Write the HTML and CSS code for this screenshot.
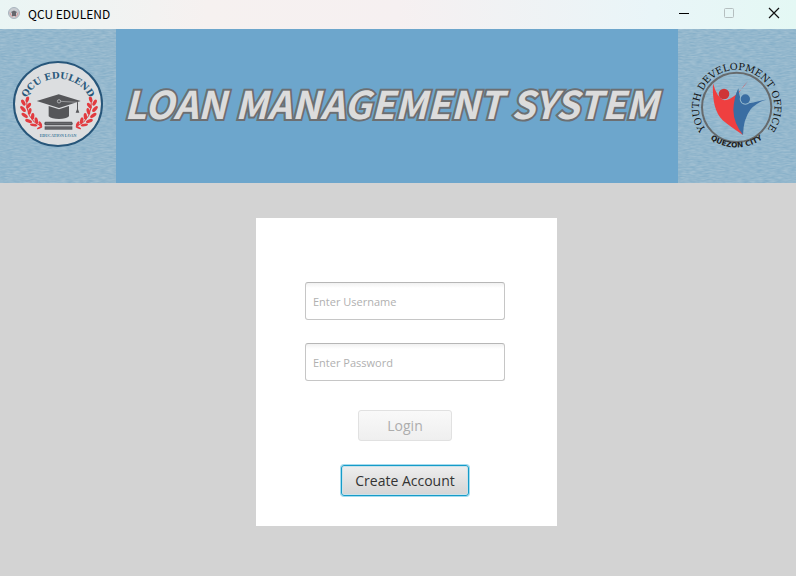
FILE: index.html
```html
<!DOCTYPE html>
<html lang="en">
<head>
<meta charset="utf-8">
<title>QCU EDULEND</title>
<link rel="stylesheet" href="styles.css">
</head>
<body>
<div class="titlebar">
  <svg class="app-icon" viewBox="0 0 12 12" aria-hidden="true">
    <circle cx="6" cy="6" r="5.5" fill="#c9cdd2" stroke="#a9b4bd"/>
    <path d="M2 5.500Q2.300 9.200 5 10M10 5.500Q9.700 9.200 7 10" fill="none" stroke="#d99a9a"/>
    <path d="M3 5L6 3.500L9 5L8 6V9H4V6Z" fill="#66666c"/>
  </svg>
  <span class="app-name">QCU EDULEND</span>
  <div class="window-controls">
    <button type="button" aria-label="Minimize"><svg viewBox="0 0 10 10"><path d="M0 5.500H10" stroke="#000"/></svg></button>
    <button type="button" aria-label="Maximize" disabled><svg viewBox="0 0 10 10"><rect x=".5" y=".5" width="9" height="9" rx="1" stroke="#b5bfc0"/></svg></button>
    <button type="button" aria-label="Close"><svg viewBox="0 0 10 10"><path d="M0 0L10 10M10 0L0 10" stroke="#111" stroke-width="1.200"/></svg></button>
  </div>
</div>

<header class="banner">
  <svg class="emblem emblem-left" viewBox="0 -63 348 462" role="img" aria-label="QCU EDULEND Education Loan">
    <defs>
      <filter id="weave" x="0" y="0" width="1" height="1" color-interpolation-filters="sRGB">
        <feTurbulence type="fractalNoise" baseFrequency=".05 .22" numOctaves="2" seed="4"/>
        <feColorMatrix values="0.16 0 0 0 .5  0.1 0 0 0 .67  0.06 0 0 0 .775  0 0 0 0 1"/>
      </filter>
      <path id="name-arc" d="M77 149A106 106 0 0 1 271 149"/>
      <g id="laurel" fill="#e23b40">
        <path d="M80 143Q75 209 124 229" fill="none" stroke="#e23b40" stroke-width="3"/>
        <ellipse cx="82" cy="148" rx="5" ry="9" transform="rotate(20 82 148)"/>
        <ellipse cx="70" cy="158" rx="5" ry="10" transform="rotate(-30 70 158)"/>
        <ellipse cx="86" cy="167" rx="5" ry="10" transform="rotate(35 86 167)"/>
        <ellipse cx="69" cy="177" rx="5" ry="11" transform="rotate(-43 69 177)"/>
        <ellipse cx="89" cy="184" rx="5" ry="10" transform="rotate(15 89 184)"/>
        <ellipse cx="74" cy="196" rx="5" ry="11" transform="rotate(-55 74 196)"/>
        <ellipse cx="98" cy="199" rx="5" ry="10" transform="rotate(5 98 199)"/>
        <ellipse cx="86" cy="213" rx="5" ry="11" transform="rotate(-68 86 213)"/>
        <ellipse cx="109" cy="212" rx="5" ry="10" transform="rotate(-12 109 212)"/>
        <ellipse cx="101" cy="225" rx="4" ry="11" transform="rotate(-82 101 225)"/>
        <ellipse cx="121" cy="222" rx="4" ry="9" transform="rotate(-30 121 222)"/>
        <ellipse cx="119" cy="233" rx="3" ry="9" transform="rotate(65 119 233)"/>
      </g>
    </defs>
    <rect y="-63" width="348" height="462" filter="url(#weave)"/>
    <ellipse cx="174" cy="162" rx="132" ry="126" fill="#dcdee0" stroke="#27567a" stroke-width="6"/>
    <text class="arc-name"><textPath href="#name-arc" startOffset="50%">QCU EDULEND</textPath></text>
    <use href="#laurel"/>
    <use href="#laurel" transform="matrix(-1 0 0 1 354 0)"/>
    <g fill="#555659">
      <path d="M110 153L176 133L242 153L177 174Z"/>
      <path d="M146 168L177 178L207 168V199Q198 207 177 207Q155 207 146 199Z"/>
      <path d="M231 155H234V178L238 188H227L231 178Z"/>
      <path d="M136 215H216Q221 221 216 226H136Q130 220 136 215Z"/>
      <path d="M134 229H217V239H134Z"/>
    </g>
    <circle cx="177" cy="154" r="5" fill="#555659" stroke="#d5d7d9" stroke-width="2"/>
    <path d="M182 154L232 157" fill="none" stroke="#d5d7d9" stroke-width="1.500"/>
    <path d="M138 220H214M136 234H215" fill="none" stroke="#a5a7a9" stroke-width="1"/>
    <text class="motto" x="174" y="262">EDUCATION LOAN</text>
  </svg>

  <h1 class="heading">LOAN MANAGEMENT SYSTEM</h1>

  <svg class="emblem emblem-right" viewBox="6 -63 354 462" role="img" aria-label="Youth Development Office Quezon City">
    <defs>
      <path id="office-arc" d="M95 245A113 113 0 1 1 269 245"/>
      <path id="city-arc" d="M82 247A132 132 0 0 0 281 247"/>
    </defs>
    <rect x="6" y="-63" width="354" height="462" filter="url(#weave)"/>
    <circle cx="182" cy="172" r="104" fill="none" stroke="#666a6c" stroke-width="6"/>
    <text class="office"><textPath href="#office-arc" startOffset="50%">YOUTH DEVELOPMENT OFFICE</textPath></text>
    <text class="city"><textPath href="#city-arc" startOffset="50%">QUEZON CITY</textPath></text>
    <path d="M111 100Q123 146 146 151Q176 148 216 93Q188 123 180 149Q166 188 201 255Q164 231 140 211Q107 179 111 100Z" fill="#ef3f40"/>
    <circle cx="144" cy="132" r="16" fill="#cf3537"/>
    <path d="M187 115Q190 151 207 161Q231 159 272 148Q241 159 224 178Q202 207 201 255Q173 220 172 180Q174 141 187 115Z" fill="#3a6da2"/>
    <circle cx="208" cy="147" r="17" fill="#94b8cd"/>
    <circle cx="208" cy="147" r="14" fill="#3a6da2"/>
  </svg>
</header>

<main class="content">
  <form class="login-card">
    <input class="field" type="text" placeholder="Enter Username" aria-label="Enter Username">
    <input class="field" type="password" placeholder="Enter Password" aria-label="Enter Password">
    <button class="button login" type="submit" disabled>Login</button>
    <button class="button create" type="button">Create Account</button>
  </form>
</main>
</body>
</html>
```
FILE: styles.css
```css
* { box-sizing: border-box; }

body {
  margin: 0;
  min-height: 100vh;
  background: #d3d3d3;
  font-family: "Open Sans", "Noto Sans", sans-serif;
}

.titlebar {
  display: flex;
  align-items: center;
  height: 29px;
  padding-left: 8px;
  padding-bottom: 3px;
  background: linear-gradient(90deg, #eaf5f4, #f6f1f0 26%, #f6f0f1 50%, #e9f5f8 82%, #e4f8f4);
}

.app-icon { width: 12px; height: 12px; margin-right: 8px; }
.app-name { font-size: 12px; font-family: "Noto Sans CJK SC", sans-serif; }

.window-controls { display: flex; margin-left: auto; }
.window-controls button {
  display: flex;
  align-items: center;
  justify-content: center;
  width: 45px;
  height: 26px;
  padding: 0;
  border: 0;
  background: none;
}
.window-controls svg { width: 10px; height: 10px; fill: none; overflow: visible; }

.banner {
  display: flex;
  align-items: center;
  height: 154px;
  background: #6da6cc;
}

.emblem { flex: none; height: 154px; }
.emblem-left { width: 116px; }
.emblem-right { width: 118px; }

.emblem text { text-anchor: middle; }
.arc-name { font: bold 27px "DejaVu Serif", serif; fill: #28587a; }
.motto { font: bold 12px "Liberation Serif", serif; fill: #437b9b; }
.office { font: 29px "DejaVu Serif", serif; fill: #111; }
.city { font: bold 22px "DejaVu Sans", sans-serif; fill: #222; }

.heading {
  flex: 1;
  min-width: 0;
  margin: 0;
  padding: 0 12px 8px 0;
  text-align: center;
  white-space: nowrap;
  font: italic bold 38px "Noto Sans CJK SC", sans-serif;
  color: #dcdcdc;
  -webkit-text-stroke: 4px #6c6f72;
  paint-order: stroke fill;
}

.content {
  display: flex;
  justify-content: center;
  padding: 35px 0 35px 17px;
}

.login-card {
  display: flex;
  flex-direction: column;
  align-items: center;
  width: 301px;
  padding: 64px 51px 30px 48px;
  background: #fff;
}

.field {
  width: 200px;
  height: 38px;
  margin-bottom: 23px;
  padding: 0 7px;
  border: 1px solid #c6c6c6;
  border-top-color: #b6b6b6;
  border-radius: 3px;
  background: linear-gradient(#f1f1f1, #fff 5px);
  font-family: inherit;
  font-size: 11px;
}
.field::placeholder { color: #b0b0b0; opacity: 1; }

.button {
  height: 31px;
  padding: 0;
  border: 1px solid #b5b5b5;
  border-radius: 3px;
  font-family: inherit;
  font-size: 14px;
  color: #333;
}

.login {
  width: 94px;
  margin: 6px 0 24px;
  border-color: #e1e1e1;
  background: linear-gradient(#f9f9f9, #efefef);
  color: #adadad;
}

.create {
  width: 128px;
  border-color: #159bc8;
  background: linear-gradient(#eeeeee, #d5d5d5);
  box-shadow: 0 0 0 1px #a5dcef, inset 0 0 0 1px #c9e2eb;
}
```
